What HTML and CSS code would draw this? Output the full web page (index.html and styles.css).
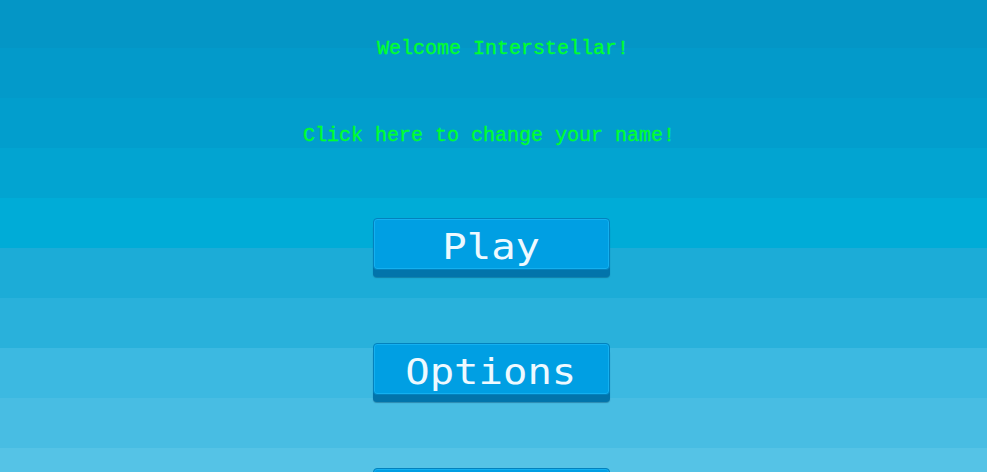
FILE: index.html
```html
<!DOCTYPE html>
<html>
<head>
<meta charset="utf-8">
<link rel="stylesheet" href="styles.css">
</head>
<body>
<main class="menu">
  <p class="welcome">Welcome Interstellar!</p>
  <p class="change-name">Click here to change your name!</p>
  <div class="buttons">
    <button class="btn"><span class="btn-label">Play</span></button>
    <button class="btn"><span class="btn-label">Options</span></button>
    <button class="btn"><span class="btn-label">Credits</span></button>
  </div>
</main>
</body>
</html>
```
FILE: styles.css
```css
html, body {
  margin: 0;
  padding: 0;
  height: 100%;
  overflow: hidden;
}
body {
  background: linear-gradient(to bottom,
    #0496c6 0 48px,
    #039aca 48px 98px,
    #029ecd 98px 148px,
    #02a4d1 148px 198px,
    #00acd7 198px 248px,
    #1cacd7 248px 298px,
    #29b1db 298px 348px,
    #3cb9e1 348px 398px,
    #48bde3 398px 448px,
    #55c3e6 448px 498px);
  font-family: "Liberation Mono", monospace;
}
.menu {
  display: flex;
  flex-direction: column;
  align-items: center;
}
.welcome, .change-name {
  margin: 0;
  color: #00ff2e;
  font-size: 20px;
  line-height: 24px;
  -webkit-text-stroke: 0.35px #00ff2e;
}
.welcome {
  margin-top: 37px;
  padding-left: 19px;
}
.change-name {
  margin-top: 63px;
  padding-right: 9px;
}
.buttons {
  margin-top: 70px;
  display: flex;
  flex-direction: column;
  align-items: center;
  gap: 73px;
  padding-right: 5px;
}
.btn {
  width: 237px;
  height: 52px;
  padding: 6px 0 0;
  border: 1px solid #0382bd;
  border-radius: 4px;
  background: #009fe3;
  box-shadow: inset 0 0 0 1px #14b0f0, 0 7px 0 #0274ab, 0 8px 1px rgba(0,60,100,0.4);
  color: #eef9ff;
  font-family: "DejaVu Sans Mono", monospace;
  font-size: 35px;
  line-height: 44px;
}
.btn-label {
  display: inline-block;
  transform: scaleX(1.16);
}
```
